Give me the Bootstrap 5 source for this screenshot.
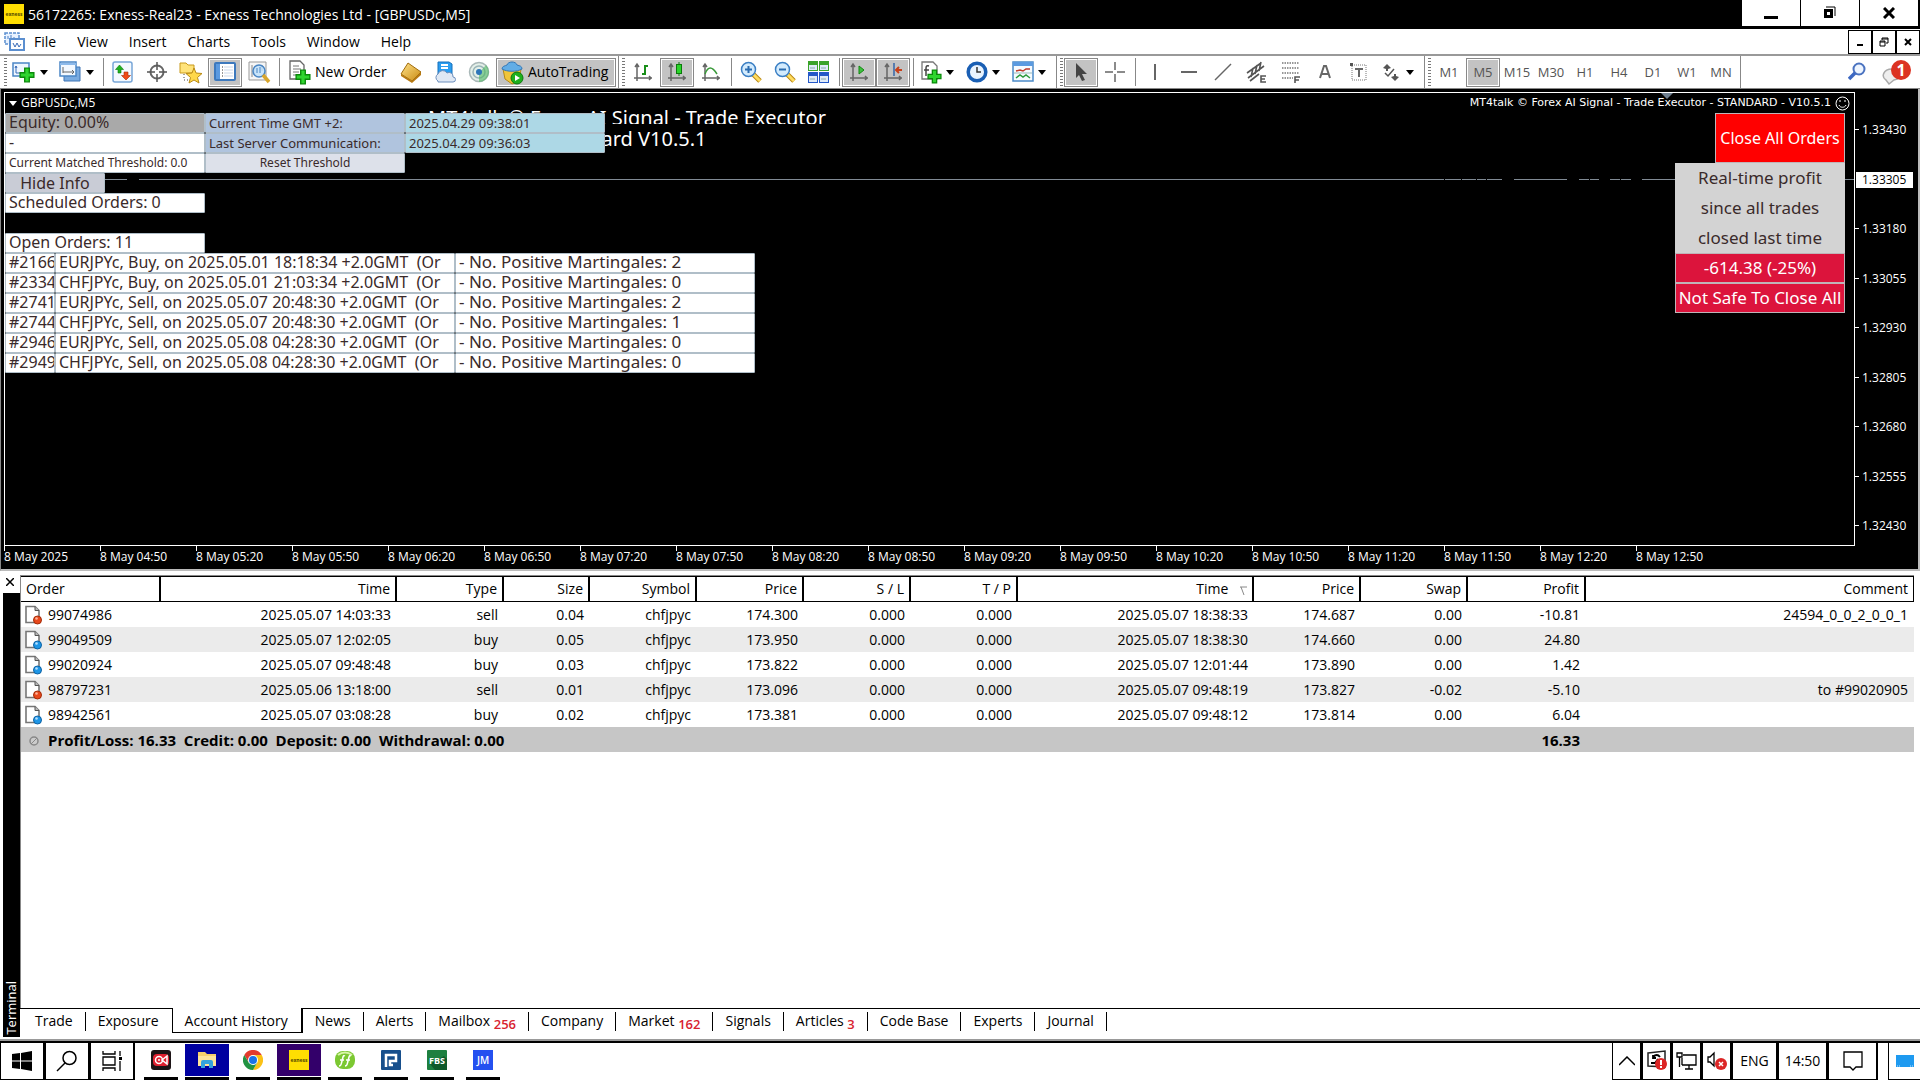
<!DOCTYPE html>
<html lang="en">
<head>
<meta charset="utf-8">
<meta name="viewport" content="width=device-width, initial-scale=1">
<title>56172265: Exness-Real23 - Exness Technologies Ltd - [GBPUSDc,M5]</title>
<link href="https://cdn.jsdelivr.net/npm/bootstrap@5.3.0/dist/css/bootstrap.min.css" rel="stylesheet">
<style>
:root{--ui:"Open Sans","Noto Sans",sans-serif;--tiny:"Open Sans","Noto Sans",sans-serif;--panel:"Noto Sans","Open Sans",sans-serif}
body{font-family:var(--ui);font-size:14px;line-height:20px;color:#000;background:#fff;overflow:hidden}
button{font:inherit;color:inherit;padding:0;border:0;background:none;white-space:nowrap}
svg{display:block;flex:none}
.titlebar{height:29px;background:#000;color:#fff}
.exlogo{width:20px;height:20px;background:#ffde02;font-size:5px;line-height:20px;color:#554a00;font-weight:700}
.winbtns{padding-right:2px}
.winbtn{width:58px;height:26px;background:#fff;margin-left:1px}
.menubar{height:25px}
.menubar a{color:#000;text-decoration:none;padding:0 11px 0 10px}
.mdibtn{width:24px;height:24px;border:1px solid #000}
.toolbar{height:35px;border-top:2px solid #999;border-bottom:1px solid #888;padding-left:2px}
.grip{width:3px;height:28px;margin:0 1px 0 2px;background:repeating-linear-gradient(#777 0 1px,#fff 1px 3px)}
.slot{width:34px;height:29px}
.slot.on,.auto.on{background:#c3c3c3;border:1px solid #888;box-shadow:inset 0 0 0 1px #fff}
.dd{width:46px;height:29px;padding-left:4px}
.caret{width:0;border:4px solid transparent;border-top:5px solid #000;border-bottom:0}
.sep{width:1px;height:28px;margin:0 2px 0 3px;background:#888}
.gend{width:1px;height:32px;margin:0 1px 0 2px;background:#888}
.neworder{width:112px;height:29px;padding-left:7px}
.auto{width:120px;height:29px}
.tf{font-family:var(--tiny);font-size:13px;color:#555}
.chart{height:482px;background:#000;color:#fff;border-left:1px solid #888;border-right:2px solid #bbb;border-bottom:2px solid #bbb;padding:3px 0 0 3px}
.plot{border:1px solid #fff;height:454px}
.tiny{font-family:var(--tiny);font-size:12px;line-height:16px}
.eaname{font-family:"DejaVu Sans",sans-serif;font-size:11px}
.axis{width:63px}
.prices{padding-top:30px;height:442px}
.prices div{height:16px}
.prices div::before{content:"";display:inline-block;width:4px;height:1px;background:#fff;vertical-align:4px;margin-right:3px}
.prices .now{background:#fff;color:#000;width:57px;margin-left:1px}
.prices .now::before{margin-right:2px;background:none}
.times div{width:96px;border-left:1px solid #fff;height:5px;overflow:visible;white-space:nowrap}
.times span{display:block;margin-left:-1px;padding-top:3px}
.panel{top:20px;left:0;font-family:var(--panel);font-size:16px;color:#3a2a2a;z-index:2}
.cellbox{height:20px;line-height:16px;border:1px solid #b0bec8;padding:0 3px;background:#fff;overflow:hidden;white-space:pre;border-radius:1px;text-align:left}
.w50{width:50px}.w100{width:100px}.w200{width:200px}.w300{width:300px}.w400{width:400px}
.w50{padding-right:0}
.w300{font-size:17px}
.small12{font-size:12px;line-height:18px}
.small13{font-size:13px;line-height:18px}
.headline{top:14px;left:0;width:1244px;text-align:center;font-family:var(--panel);font-size:20px;line-height:22px}
.cut{height:17px;overflow:hidden}
.right{top:20px;right:9px;font-family:var(--panel);font-size:17px}
.right button,.right .rt{height:30px;width:170px;border:1px solid #c0b4b8;text-align:center;line-height:28px;white-space:nowrap}
.right .closeall{width:130px;height:50px;background:#f00;font-size:16px}
.right .rt{background:#d3d3d3;color:#3a2a2a;border-color:#d3d3d3}
.right .crimson{background:#dc143c;color:#fff;border-color:#c0b4b8}
.terminal{min-height:0;padding-top:4px}
.side{width:20px}
.strip{width:17px;margin-left:3px;background:#000;color:#fff}
.strip span{writing-mode:vertical-rl;transform:rotate(180deg);font-size:13px;line-height:17px;padding-top:2px}
.hist{table-layout:fixed;width:100%;border-collapse:separate;border-spacing:0}
.hist th{height:26px;line-height:18px;font-weight:400;border:solid #000;border-width:1px 2px 1px 0;text-align:right;padding:0 5px}
.hist th:first-child,.hist td:first-child{text-align:left}
.hist th:last-child{border-right-width:1px}
.hist td{height:25px;padding:0 6px 0 5px;text-align:right;white-space:nowrap}
.hist tbody tr:nth-child(even){background:#ebebeb}
.hist tbody tr.total{background:#c6c6c6;font-weight:700;font-size:15px}
.hist td:first-child{padding-left:3px}
.docline{gap:6px}
.termbody{border-left:1px solid #888;border-top:1px solid #888;margin-right:6px}
.tabs{height:33px;border-top:1px solid #000;padding-left:3px}
.tabs a{color:#000;text-decoration:none;display:block;line-height:20px;padding:3px 13px 0 12px;white-space:nowrap}
.tabs li{height:24px;margin-top:-1px;position:relative}
.tabs li:not(.cur):not(.pre)::after{content:"";position:absolute;right:0;top:4px;height:19px;width:1px;background:#000}
.tabs .cur{border:solid #000;border-width:0 2px 1px 1px;background:#fff;height:25px}
.tabs sub{font-size:13px;color:#d8232f;font-weight:600;bottom:-3px;vertical-align:baseline}
.taskbar{height:39px;border-top:2px solid #000;box-shadow:0 -2px #999}
.tbox{border:1px solid #000;border-width:0 2px 1px 1px;height:37px}
.apps{padding-left:3px}
.app{width:34px;height:37px;margin:0 6px}
.app.wide{width:44px;margin:0 1px}
.app .ico{height:32px;width:100%}
.app .bar{height:3px;margin-top:1px;background:#000;width:100%}
</style>
<script src="https://cdn.jsdelivr.net/npm/bootstrap@5.3.0/dist/js/bootstrap.bundle.min.js"></script>
</head>
<body class="vh-100 d-flex flex-column">
<svg width="0" height="0" class="position-absolute">
<defs>
<linearGradient id="gold" x1="0" y1="0" x2="1" y2="1"><stop offset="0" stop-color="#ffe28a"/><stop offset="1" stop-color="#c98a10"/></linearGradient>
<symbol id="docbase" viewBox="0 0 18 20"><path d="M2 1.500h9l4 4v12H2z" fill="#fff" stroke="#777" stroke-width="1.600"/><path d="M11 1.500v4h4" fill="#bbb" stroke="#555"/></symbol>
<symbol id="sell" viewBox="0 0 18 20"><use href="#docbase"/><circle cx="13.500" cy="15" r="4" fill="#e8481c" stroke="#a22c08"/><circle cx="12.500" cy="13.500" r="1.300" fill="#ffb499"/></symbol>
<symbol id="buy" viewBox="0 0 18 20"><use href="#docbase"/><circle cx="13.500" cy="15" r="4" fill="#1e96e6" stroke="#0c62a4"/><circle cx="12.500" cy="13.500" r="1.300" fill="#b5e0ff"/></symbol>
<symbol id="axes" viewBox="0 0 20 20"><path d="M4 2v17M1 16h18M2 5l2-3 2 3M16 14l2 2-2 2" fill="none" stroke="#666" stroke-width="1.500"/></symbol>
<symbol id="plus" viewBox="0 0 14 14"><path d="M5 1h4v4h4v4H9v4H5V9H1V5h4z" fill="#2fd52f" stroke="#0a8a0a" stroke-width="1.200"/></symbol>
</defs>
</svg>

<header class="titlebar d-flex align-items-start">
  <div class="exlogo text-center mt-1 ms-1">exness</div>
  <div class="ms-1" style="padding-top:5px">56172265: Exness-Real23 - Exness Technologies Ltd - [GBPUSDc,M5]</div>
  <div class="ms-auto d-flex winbtns">
    <button class="winbtn d-flex justify-content-center align-items-center" aria-label="Minimize"><svg width="14" height="14"><path d="M0 10h14v3H0z"/></svg></button>
    <button class="winbtn d-flex justify-content-center align-items-center" aria-label="Restore"><svg width="14" height="14"><path d="M3 1h9v9" fill="none" stroke="#000"/><path d="M2.500 4.500h6v6h-6z" fill="none" stroke="#000" stroke-width="3"/></svg></button>
    <button class="winbtn d-flex justify-content-center align-items-center" aria-label="Close"><svg width="12" height="12"><path d="M1 1l10 10M11 1L1 11" stroke="#000" stroke-width="3"/></svg></button>
  </div>
</header>

<nav class="menubar d-flex align-items-center">
  <svg class="ms-1" width="22" height="22" viewBox="0 0 22 22"><path d="M1 2h14v11H1z" fill="#e8f2ff" stroke="#5b8fd0" stroke-width="1.500" stroke-dasharray="3 1"/><path d="M4 8V5m3 4V4m3 4V6" stroke="#4a7fc4"/><path d="M6 8h14v11H6z" fill="#fff" stroke="#5b8fd0" stroke-width="2"/><path d="M9 12l2 4 2-4 2 4 2-3" fill="none" stroke="#3a6cb8"/></svg>
  <a href="#" class="ps-2">File</a><a href="#">View</a><a href="#">Insert</a><a href="#">Charts</a><a href="#">Tools</a><a href="#">Window</a><a href="#">Help</a>
  <div class="ms-auto d-flex">
    <button class="mdibtn d-flex justify-content-center align-items-center" aria-label="Minimize chart"><svg width="8" height="10"><path d="M1 7h6v2H1z"/></svg></button>
    <button class="mdibtn d-flex justify-content-center align-items-center" aria-label="Restore chart"><svg width="10" height="10"><path d="M3 3V1h6v5H7M1 4h5v5H1zM1 5h5M3 2h6" fill="none" stroke="#000"/></svg></button>
    <button class="mdibtn d-flex justify-content-center align-items-center" aria-label="Close chart"><svg width="8" height="8"><path d="M1 1l6 6M7 1L1 7" stroke="#000" stroke-width="2"/></svg></button>
  </div>
</nav>

<div class="toolbar d-flex align-items-center">
  <i class="grip"></i>
  <button class="dd d-flex align-items-center gap-1" aria-label="New chart"><svg width="24" height="24" viewBox="0 0 24 24"><path d="M1 3h16v13H1z" fill="#eef6ff" stroke="#4b86c6" stroke-width="1.500"/><path d="M4 6v7h8M3 8l1-2 1 2" fill="none" stroke="#3a6cb8"/><use href="#plus" x="7" y="7" width="16" height="16"/></svg><i class="caret"></i></button>
  <button class="dd d-flex align-items-center gap-1" aria-label="Profiles"><svg width="24" height="24" viewBox="0 0 24 24"><path d="M6 7h16v14H6z" fill="#7aabe0" stroke="#3f74b5"/><path d="M2 2h16v14H2z" fill="#f2f8ff" stroke="#4b86c6" stroke-width="1.500"/><path d="M2 3h16v2H2z" fill="#8cb9ea"/><path d="M5 7v6M5 12h10M14 10l2 2-2 2" fill="none" stroke="#666"/></svg><i class="caret"></i></button>
  <i class="sep"></i>
  <button class="slot d-flex justify-content-center align-items-center" aria-label="Market Watch"><svg width="22" height="22" viewBox="0 0 22 22"><rect x="1" y="1" width="19" height="20" rx="2" fill="#f4f9ff" stroke="#78a6d8" stroke-width="1.500"/><path d="M7.500 4l4 4.500H9V12H6V8.500H3.500z" fill="#1fb21f" stroke="#0c7a0c" stroke-width=".6"/><path d="M14 19l-4.500-4.500H12V11h4v3.500h2.500z" fill="#f04a18" stroke="#a82c08" stroke-width=".6"/></svg></button>
  <button class="slot d-flex justify-content-center align-items-center" aria-label="Data Window"><svg width="20" height="22" viewBox="0 0 20 22"><circle cx="10" cy="11" r="6.500" fill="none" stroke="#666" stroke-width="2"/><path d="M10 1v8m0 4v8M0 11h8m4 0h8" stroke="#555" stroke-width="1.500"/></svg></button>
  <button class="slot d-flex justify-content-center align-items-center" aria-label="Navigator"><svg width="24" height="24" viewBox="0 0 24 24"><path d="M1 3h6l2 2h6v8H1z" fill="#ffe37a" stroke="#c99a1c"/><path d="M5 14v6h5" fill="none" stroke="#444" stroke-dasharray="1 2"/><path d="M15 8l2 5 6 .5-4.500 4 1.500 5.500-5-3-5 3 1.500-5.500L7 13.500l6-.5z" fill="#ffd84a" stroke="#b98a14"/></svg></button>
  <button class="slot on d-flex justify-content-center align-items-center" aria-label="Terminal"><svg width="22" height="20" viewBox="0 0 22 20"><rect x="1" y="1" width="20" height="17" rx="1" fill="#fff" stroke="#3d79bd" stroke-width="2"/><path d="M2 2h4v15H2z" fill="#5b9ae0"/><path d="M10 5h9M10 8h9M10 11h9M10 14h9" stroke="#cbd8ea"/><path d="M8 5h1M8 8h1M8 11h1M8 14h1" stroke="#333"/></svg></button>
  <button class="slot d-flex justify-content-center align-items-center" aria-label="Strategy Tester"><svg width="24" height="24" viewBox="0 0 24 24"><path d="M2 2h17v18H2z" fill="#f6f6f6" stroke="#999"/><path d="M5 5v12m2-9v5m8-8v6" stroke="#888"/><circle cx="12" cy="11" r="6" fill="#bfe0fa" fill-opacity=".85" stroke="#4a86c4" stroke-width="1.500"/><path d="M10 8v5m3-6v6" stroke="#4a86c4"/><path d="M16 15l6 7" stroke="#d9a62c" stroke-width="3.500"/></svg></button>
  <i class="sep"></i>
  <button class="neworder d-flex align-items-center"><svg width="22" height="26" viewBox="0 0 22 26"><path d="M1 2h10l4 4v14H1z" fill="#fff" stroke="#666" stroke-width="1.300"/><path d="M4 7h6M4 10h8M4 13h6M4 16h3" stroke="#777"/><use href="#plus" x="6" y="10" width="16" height="16"/></svg><span class="ms-1">New Order</span></button>
  <button class="slot d-flex justify-content-center align-items-center" aria-label="MetaEditor"><svg width="22" height="22" viewBox="0 0 22 22"><path d="M8 2l13 9-9 9L1 13z" fill="url(#gold)" stroke="#a06c0c"/><path d="M1 13l11 7 9-9v3l-9 8L1 15z" fill="#b87a12"/></svg></button>
  <button class="slot d-flex justify-content-center align-items-center" aria-label="Virtual Hosting"><svg width="22" height="24" viewBox="0 0 22 24"><path d="M4 2h11l3 2v12H4z" fill="#2a9df0" stroke="#1670bb"/><path d="M7 5h7M7 8h7" stroke="#fff" stroke-width="2"/><path d="M4 21a4 4 0 010-7 5 5 0 019-1 4 4 0 016 4 2.500 2.500 0 010 5H4z" fill="#dfe8f4" stroke="#6d8fbd"/></svg></button>
  <button class="slot d-flex justify-content-center align-items-center" aria-label="Signals"><svg width="22" height="22" viewBox="0 0 22 22"><circle cx="11" cy="11" r="9.500" fill="#e4efe8" stroke="#a9b8b8" stroke-width="1.500"/><circle cx="11" cy="11" r="6" fill="none" stroke="#9ab5b8" stroke-width="1.500"/><path d="M11 12v9a10 10 0 007-17z" fill="#4fb862" fill-opacity=".6"/><circle cx="11" cy="11" r="3" fill="#2d76b8"/></svg></button>
  <button class="auto on d-flex align-items-center ps-1"><svg width="23" height="25" viewBox="0 0 23 25"><path d="M2 9h18l-2 12-7 3-7-5z" fill="#f0c53a" stroke="#b58a16"/><path d="M1 9c0-3 3-3 5-4 1-4 9-4 10 0 3 1 5 1 5 4-5 3-15 3-20 0z" fill="#62ade6" stroke="#3478b8"/><circle cx="16" cy="18" r="6" fill="#1db01d" stroke="#0d770d"/><path d="M14 15l5 3-5 3z" fill="#fff"/></svg><span class="ms-1">AutoTrading</span></button>
  <i class="gend"></i><i class="grip"></i>
  <button class="slot d-flex justify-content-center align-items-center" aria-label="Bar chart"><svg width="20" height="20"><use href="#axes"/><path d="M12 3v10M12 4h3M9 12h3" stroke="#1a8f1a" stroke-width="2"/></svg></button>
  <button class="slot on d-flex justify-content-center align-items-center" aria-label="Candlesticks"><svg width="20" height="20"><use href="#axes"/><path d="M12 0v14" stroke="#0b7a0b"/><rect x="9.500" y="2.500" width="5" height="9" fill="#2ad52a" stroke="#0b7a0b"/></svg></button>
  <button class="slot d-flex justify-content-center align-items-center" aria-label="Line chart"><svg width="20" height="20"><use href="#axes"/><path d="M4 12c3-8 7-8 12 0" fill="none" stroke="#3a9a3a" stroke-width="1.500"/></svg></button>
  <i class="sep"></i>
  <button class="slot d-flex justify-content-center align-items-center" aria-label="Zoom in"><svg width="22" height="22" viewBox="0 0 22 22"><path d="M13 13l7 7" stroke="#b98710" stroke-width="5"/><path d="M13 13l7 7" stroke="#ffdc60" stroke-width="3"/><circle cx="8.500" cy="8.500" r="7" fill="#d3ebfd" stroke="#3b7fc4" stroke-width="1.500"/><path d="M8.500 5v7M5 8.500h7" stroke="#2b6cb0" stroke-width="2"/></svg></button>
  <button class="slot d-flex justify-content-center align-items-center" aria-label="Zoom out"><svg width="22" height="22" viewBox="0 0 22 22"><path d="M13 13l7 7" stroke="#b98710" stroke-width="5"/><path d="M13 13l7 7" stroke="#ffdc60" stroke-width="3"/><circle cx="8.500" cy="8.500" r="7" fill="#d3ebfd" stroke="#3b7fc4" stroke-width="1.500"/><path d="M5 8.500h7" stroke="#2b6cb0" stroke-width="2"/></svg></button>
  <button class="slot d-flex justify-content-center align-items-center" aria-label="Tile windows"><svg width="22" height="22"><path d="M0 0h10v10H0zM11 0h10v10H11z" fill="#3aa32a"/><path d="M0 11h10v11H0zM11 11h10v11H11z" fill="#2458c8"/><path d="M1 4h8v5H1zM12 4h8v5h-8zM1 15h8v6H1zM12 15h8v6h-8z" fill="#dfeaf8"/><path d="M2 7h5M13 7h5M2 18h5M13 18h5" stroke="#8aa"/></svg></button>
  <i class="sep"></i>
  <button class="slot on d-flex justify-content-center align-items-center" aria-label="Auto scroll"><svg width="20" height="20"><use href="#axes"/><path d="M10 4l5 4-5 4z" fill="#3fc03f" stroke="#118811"/></svg></button>
  <button class="slot on d-flex justify-content-center align-items-center" aria-label="Chart shift"><svg width="20" height="20"><use href="#axes"/><path d="M11 1v13" stroke="#36a" stroke-width="1.500"/><path d="M19 8h-5M16 5l-3 3 3 3" fill="none" stroke="#c8401a" stroke-width="2"/></svg></button>
  <i class="sep"></i>
  <button class="dd d-flex align-items-center gap-1" aria-label="Indicators"><svg width="22" height="24" viewBox="0 0 22 24"><path d="M2 2h11l4 4v13H2z" fill="#fff" stroke="#777" stroke-width="1.300"/><path d="M9 6c-3-1-3 1-3 3v7M4 10h5" fill="none" stroke="#444" stroke-width="1.500"/><use href="#plus" x="7" y="9" width="15" height="15"/></svg><i class="caret"></i></button>
  <button class="dd d-flex align-items-center gap-1" aria-label="Periods"><svg width="22" height="22" viewBox="0 0 22 22"><circle cx="11" cy="11" r="8.800" fill="#e9f4ff" stroke="#1a5fb4" stroke-width="3.500"/><path d="M11 6v5h4" fill="none" stroke="#333" stroke-width="1.500"/></svg><i class="caret"></i></button>
  <button class="dd d-flex align-items-center gap-1" aria-label="Templates"><svg width="22" height="22" viewBox="0 0 22 22"><rect x="1" y="1" width="20" height="19" fill="#f6fbff" stroke="#4b8ac8" stroke-width="1.500"/><path d="M1 1h20v4H1z" fill="#5b9ae0"/><path d="M4 10l4-1 3 1 3-2 4 0" fill="none" stroke="#c0392b" stroke-width="1.500"/><path d="M4 17l4-3 3 2 3-2 4 3" fill="none" stroke="#2e9a3e" stroke-width="1.500"/><path d="M2 12h18" stroke="#9bb"/></svg><i class="caret"></i></button>
  <i class="gend"></i><i class="grip"></i>
  <button class="slot on d-flex justify-content-center align-items-center" aria-label="Cursor"><svg width="14" height="20" viewBox="0 0 14 20"><path d="M2 1v15l3-3 3 6 3-1-3-6h5z" fill="#444"/></svg></button>
  <button class="slot d-flex justify-content-center align-items-center" aria-label="Crosshair"><svg width="20" height="20"><path d="M10 0v8m0 4v8M0 10h8m4 0h8" stroke="#666" stroke-width="1.500"/></svg></button>
  <i class="sep"></i>
  <button class="slot d-flex justify-content-center align-items-center" aria-label="Vertical line"><svg width="4" height="18"><path d="M2 1v16" stroke="#666" stroke-width="2"/></svg></button>
  <button class="slot d-flex justify-content-center align-items-center" aria-label="Horizontal line"><svg width="16" height="4"><path d="M0 2h16" stroke="#666" stroke-width="2"/></svg></button>
  <button class="slot d-flex justify-content-center align-items-center" aria-label="Trendline"><svg width="18" height="18"><path d="M1 17L17 1" stroke="#666" stroke-width="1.500"/></svg></button>
  <button class="slot d-flex justify-content-center align-items-center" aria-label="Equidistant channel"><svg width="22" height="22" viewBox="0 0 22 22"><path d="M1 12L15 2M2 17L18 5M5 16l2-9m2 6l2-9m2 6l2-9M4 20l9-7" stroke="#555" stroke-width="1.600"/><path d="M20 15h-5v6h5M15 18h4" fill="none" stroke="#555" stroke-width="1.600"/></svg></button>
  <button class="slot d-flex justify-content-center align-items-center" aria-label="Fibonacci"><svg width="20" height="22" viewBox="0 0 20 22"><path d="M1 2h17M1 7h17M1 12h17M1 17h11" stroke="#777" stroke-width="1.500" stroke-dasharray="1.500 1"/><path d="M14 22v-6h5M14 19h4" fill="none" stroke="#555" stroke-width="1.600"/></svg></button>
  <button class="slot d-flex justify-content-center align-items-center" aria-label="Text"><svg width="12" height="14"><path d="M1 13L5 1h2l4 12M3 9h6" fill="none" stroke="#666" stroke-width="2"/></svg></button>
  <button class="slot d-flex justify-content-center align-items-center" aria-label="Text label"><svg width="18" height="20"><path d="M2 3h14v15H2z" fill="none" stroke="#777" stroke-dasharray="1 1"/><path d="M0 1h3v3H0z" fill="#555"/><path d="M5 7h8M9 7v8" stroke="#666" stroke-width="2"/></svg></button>
  <button class="dd d-flex align-items-center gap-1" aria-label="Arrows"><svg width="22" height="20"><path d="M7 2l4 4-3 1v2H6V7L3 6zM15 19l-4-4 3-1v-2h2v2l3 1z" fill="#555"/><path d="M5 11l3 3 6-7" fill="none" stroke="#555" stroke-width="1.500"/></svg><i class="caret"></i></button>
  <i class="gend"></i><i class="grip"></i>
  <button class="slot tf">M1</button><button class="slot tf on">M5</button><button class="slot tf">M15</button><button class="slot tf">M30</button><button class="slot tf">H1</button><button class="slot tf">H4</button><button class="slot tf">D1</button><button class="slot tf">W1</button><button class="slot tf">MN</button>
  <i class="gend"></i>
  <div class="ms-auto d-flex gap-3 pe-2">
    <button aria-label="Search"><svg width="18" height="26" viewBox="2 0 18 26"><circle cx="13" cy="10" r="5.500" fill="#eef5ff" stroke="#4a72c0" stroke-width="2"/><path d="M9 14l-6 6" stroke="#3d68c2" stroke-width="3.500"/></svg></button>
    <button aria-label="Notifications"><svg width="30" height="28" viewBox="0 0 30 28"><path d="M4 22c-5-3-3-11 6-11s12 9 2 11l-5 4z" fill="#eee" stroke="#aaa" stroke-width="1.500"/><circle cx="19" cy="12" r="10" fill="#dc3322"/><text x="19" y="18" text-anchor="middle" font-family="Open Sans" font-weight="700" font-size="16" fill="#fff">1</text></svg></button>
  </div>
</div>

<main class="chart">
  <div class="d-flex">
    <div class="plot flex-grow-1 position-relative">
      <div class="d-flex justify-content-between align-items-center tiny" style="height:20px">
        <div class="d-flex align-items-center gap-1"><i class="caret ms-1" style="border-top-color:#fff"></i><span>GBPUSDc,M5</span></div>
        <div class="d-flex align-items-center gap-1 pe-1"><span class="eaname">MT4talk © Forex AI Signal - Trade Executor - STANDARD - V10.5.1</span><svg width="15" height="15"><circle cx="7.500" cy="7.500" r="6.500" fill="none" stroke="#fff"/><path d="M4 9c1 3 6 3 7 0M5 4v2M10 4v2" fill="none" stroke="#fff"/></svg></div>
      </div>
      <svg class="position-absolute" style="right:181px;top:0" width="12" height="6"><path d="M0 0h12L6 6z" fill="#708090"/></svg>
      <div class="position-absolute headline"><div class="cut">MT4talk © Forex AI Signal - Trade Executor</div><div class="pt-1">Standard V10.5.1</div></div>
      <div class="position-absolute w-100 d-flex" style="top:86px;height:1px;padding-left:100px">
        <svg width="34" height="1"><path d="M0 .5h22" stroke="#808a94"/></svg><div class="flex-grow-1" style="background:#808a94"></div>
        <svg width="412" height="1"><path d="M0 .5h2M3 .5h16M20 .5h14M35 .5h9M45 .5h15M72 .5h53M137 .5h10M148 .5h9M168 .5h10M179 .5h10M200 .5h212" stroke="#808a94"/></svg>
      </div>
      <section class="position-absolute panel">
        <div class="d-flex"><div class="cellbox w200" style="background:#a9a9a9">Equity: 0.00%</div><div class="cellbox w200 small13" style="background:#b0c4de">Current Time GMT +2:</div><div class="cellbox w200 small13" style="background:#add8e6">2025.04.29 09:38:01</div></div>
        <div class="d-flex"><div class="cellbox w200">-</div><div class="cellbox w200 small13" style="background:#b0c4de">Last Server Communication:</div><div class="cellbox w200 small13" style="background:#add8e6">2025.04.29 09:36:03</div></div>
        <div class="d-flex"><div class="cellbox w200 small12">Current Matched Threshold: 0.0</div><button class="cellbox w200 small12 text-center" style="background:#dde1ea">Reset Threshold</button></div>
        <button class="cellbox w100 d-block text-center" style="background:#c9ccd6">Hide Info</button>
        <div class="cellbox w200">Scheduled Orders: 0</div>
        <div class="cellbox w200" style="margin-top:20px">Open Orders: 11</div>
        <div class="d-flex"><div class="cellbox w50">#2166</div><div class="cellbox w400">EURJPYc, Buy, on 2025.05.01 18:18:34 +2.0GMT  (Or</div><div class="cellbox w300">- No. Positive Martingales: 2</div></div>
        <div class="d-flex"><div class="cellbox w50">#2334</div><div class="cellbox w400">CHFJPYc, Buy, on 2025.05.01 21:03:34 +2.0GMT  (Or</div><div class="cellbox w300">- No. Positive Martingales: 0</div></div>
        <div class="d-flex"><div class="cellbox w50">#2741</div><div class="cellbox w400">EURJPYc, Sell, on 2025.05.07 20:48:30 +2.0GMT  (Or</div><div class="cellbox w300">- No. Positive Martingales: 2</div></div>
        <div class="d-flex"><div class="cellbox w50">#2744</div><div class="cellbox w400">CHFJPYc, Sell, on 2025.05.07 20:48:30 +2.0GMT  (Or</div><div class="cellbox w300">- No. Positive Martingales: 1</div></div>
        <div class="d-flex"><div class="cellbox w50">#2946</div><div class="cellbox w400">EURJPYc, Sell, on 2025.05.08 04:28:30 +2.0GMT  (Or</div><div class="cellbox w300">- No. Positive Martingales: 0</div></div>
        <div class="d-flex"><div class="cellbox w50">#2949</div><div class="cellbox w400">CHFJPYc, Sell, on 2025.05.08 04:28:30 +2.0GMT  (Or</div><div class="cellbox w300">- No. Positive Martingales: 0</div></div>
      </section>
      <section class="position-absolute right d-flex flex-column align-items-end">
        <button class="closeall">Close All Orders</button>
        <div class="rt">Real-time profit</div><div class="rt">since all trades</div><div class="rt">closed last time</div>
        <div class="rt crimson">-614.38 (-25%)</div>
        <button class="crimson">Not Safe To Close All</button>
      </section>
    </div>
    <div class="axis tiny"><div class="prices d-flex flex-column justify-content-between">
      <div>1.33430</div><div class="now">1.33305</div><div>1.33180</div><div>1.33055</div><div>1.32930</div><div>1.32805</div><div>1.32680</div><div>1.32555</div><div>1.32430</div>
    </div></div>
  </div>
  <div class="times tiny d-flex">
    <div><span>8 May 2025</span></div><div><span>8 May 04:50</span></div><div><span>8 May 05:20</span></div><div><span>8 May 05:50</span></div><div><span>8 May 06:20</span></div><div><span>8 May 06:50</span></div><div><span>8 May 07:20</span></div><div><span>8 May 07:50</span></div><div><span>8 May 08:20</span></div><div><span>8 May 08:50</span></div><div><span>8 May 09:20</span></div><div><span>8 May 09:50</span></div><div><span>8 May 10:20</span></div><div><span>8 May 10:50</span></div><div><span>8 May 11:20</span></div><div><span>8 May 11:50</span></div><div><span>8 May 12:20</span></div><div><span>8 May 12:50</span></div>
  </div>
</main>

<section class="terminal flex-grow-1 d-flex">
  <div class="side d-flex flex-column">
    <button class="d-flex justify-content-center" style="height:18px;padding-top:3px" aria-label="Close terminal"><svg width="8" height="8"><path d="M0 0l8 8M8 0L0 8" stroke="#000" stroke-width="1.500"/></svg></button>
    <div class="strip flex-grow-1 d-flex align-items-end mb-1"><span>Terminal</span></div>
  </div>
  <div class="flex-grow-1 d-flex flex-column">
    <div class="termbody flex-grow-1">
      <table class="hist">
        <colgroup><col style="width:140px"><col style="width:236px"><col style="width:107px"><col style="width:86px"><col style="width:107px"><col style="width:107px"><col style="width:107px"><col style="width:107px"><col style="width:236px"><col style="width:107px"><col style="width:107px"><col style="width:118px"><col></colgroup>
        <thead><tr><th>Order</th><th>Time</th><th>Type</th><th>Size</th><th>Symbol</th><th>Price</th><th>S / L</th><th>T / P</th><th>Time <svg class="d-inline ms-2" width="7" height="9"><path d="M0 1h7M1 1l3 8" fill="none" stroke="#888"/></svg></th><th>Price</th><th>Swap</th><th>Profit</th><th>Comment</th></tr></thead>
        <tbody>
        <tr><td><div class="d-flex align-items-center docline"><svg width="18" height="20"><use href="#sell"/></svg>99074986</div></td><td>2025.05.07 14:03:33</td><td>sell</td><td>0.04</td><td>chfjpyc</td><td>174.300</td><td>0.000</td><td>0.000</td><td>2025.05.07 18:38:33</td><td>174.687</td><td>0.00</td><td>-10.81</td><td>24594_0_0_2_0_0_1</td></tr>
        <tr><td><div class="d-flex align-items-center docline"><svg width="18" height="20"><use href="#buy"/></svg>99049509</div></td><td>2025.05.07 12:02:05</td><td>buy</td><td>0.05</td><td>chfjpyc</td><td>173.950</td><td>0.000</td><td>0.000</td><td>2025.05.07 18:38:30</td><td>174.660</td><td>0.00</td><td>24.80</td><td></td></tr>
        <tr><td><div class="d-flex align-items-center docline"><svg width="18" height="20"><use href="#buy"/></svg>99020924</div></td><td>2025.05.07 09:48:48</td><td>buy</td><td>0.03</td><td>chfjpyc</td><td>173.822</td><td>0.000</td><td>0.000</td><td>2025.05.07 12:01:44</td><td>173.890</td><td>0.00</td><td>1.42</td><td></td></tr>
        <tr><td><div class="d-flex align-items-center docline"><svg width="18" height="20"><use href="#sell"/></svg>98797231</div></td><td>2025.05.06 13:18:00</td><td>sell</td><td>0.01</td><td>chfjpyc</td><td>173.096</td><td>0.000</td><td>0.000</td><td>2025.05.07 09:48:19</td><td>173.827</td><td>-0.02</td><td>-5.10</td><td>to #99020905</td></tr>
        <tr><td><div class="d-flex align-items-center docline"><svg width="18" height="20"><use href="#buy"/></svg>98942561</div></td><td>2025.05.07 03:08:28</td><td>buy</td><td>0.02</td><td>chfjpyc</td><td>173.381</td><td>0.000</td><td>0.000</td><td>2025.05.07 09:48:12</td><td>173.814</td><td>0.00</td><td>6.04</td><td></td></tr>
        <tr class="total"><td colspan="11"><div class="d-flex align-items-center docline"><svg width="18" height="20"><circle cx="10" cy="11" r="4" fill="#ccc" stroke="#888" stroke-width="1.500"/><path d="M7 14l6-6" stroke="#888"/></svg>Profit/Loss: 16.33&nbsp; Credit: 0.00&nbsp; Deposit: 0.00&nbsp; Withdrawal: 0.00</div></td><td>16.33</td><td></td></tr>
        </tbody>
      </table>
    </div>
    <ul class="tabs list-unstyled d-flex mb-0">
      <li><a href="#">Trade</a></li><li class="pre"><a href="#">Exposure</a></li><li class="cur"><a href="#">Account History</a></li><li><a href="#">News</a></li><li><a href="#">Alerts</a></li><li><a href="#">Mailbox <sub>256</sub></a></li><li><a href="#">Company</a></li><li><a href="#">Market <sub>162</sub></a></li><li><a href="#">Signals</a></li><li><a href="#">Articles <sub>3</sub></a></li><li><a href="#">Code Base</a></li><li><a href="#">Experts</a></li><li><a href="#">Journal</a></li>
    </ul>
  </div>
</section>

<footer class="taskbar d-flex">
  <button class="tbox d-flex justify-content-center align-items-center" style="width:45px" aria-label="Start"><svg width="20" height="20"><path d="M0 3l8-1v7.500H0zM9 2l11-2v9.500H9zM0 10.500h8V18l-8-1zM9 10.500h11V20L9 18z"/></svg></button>
  <button class="tbox d-flex justify-content-center align-items-center" style="width:45px" aria-label="Search"><svg width="22" height="22"><circle cx="13.500" cy="8" r="6.500" fill="none" stroke="#000" stroke-width="1.500"/><path d="M9 13l-8 8" stroke="#000" stroke-width="1.500"/></svg></button>
  <button class="tbox d-flex justify-content-center align-items-center" style="width:45px" aria-label="Task view"><svg width="20" height="20"><path d="M1 0v3h12V0M1 20v-3h12v3M1 6h12v8H1zM18 0v5M18 10v10" fill="none" stroke="#000" stroke-width="1.300"/><path d="M17 6h3v3h-3z"/></svg></button>
  <div class="d-flex apps">
  <button class="app" aria-label="Recorder"><span class="ico d-flex justify-content-center align-items-center"><svg width="20" height="20"><rect width="20" height="20" rx="3" fill="#1c1416"/><rect x="2" y="4" width="16" height="12" rx="4" fill="#e02030"/><circle cx="8" cy="10" r="3.500" fill="none" stroke="#fff" stroke-width="1.500"/><path d="M11 10l5-4v8z" fill="none" stroke="#fff" stroke-width="1.500"/><circle cx="8" cy="10" r="1" fill="#fff"/></svg></span><span class="bar d-block"></span></button>
  <button class="app wide" aria-label="File Explorer"><span class="ico d-flex justify-content-center align-items-center" style="background:#0000a0"><svg width="20" height="18"><path d="M1 1h7l2 2h9v12H1z" fill="#f7cf6b"/><path d="M1 5h18v10H1z" fill="#ffe49a"/><path d="M4 17v-6q0-2 2-2h8q2 0 2 2v6h-4v-4H8v4z" fill="#35a3dc"/></svg></span><span class="bar d-block"></span></button>
  <button class="app" aria-label="Chrome"><span class="ico d-flex justify-content-center align-items-center"><svg width="20" height="20" viewBox="-10 -10 20 20"><path d="M-8.700-5A10 10 0 018.700-5H0L-4.300 2.500z" fill="#e33b2e"/><path d="M8.700-5A10 10 0 010 10L4.300 2.500 0-5z" fill="#fbc116"/><path d="M-8.700-5A10 10 0 000 10L4.300 2.500H-4.300z" fill="#229342"/><circle r="5" fill="#fff"/><circle r="4" fill="#1a73e8"/></svg></span><span class="bar d-block"></span></button>
  <button class="app wide" aria-label="Exness terminal"><span class="ico d-flex justify-content-center align-items-center" style="background:#33006a"><span class="exlogo">exness</span></span><span class="bar d-block"></span></button>
  <button class="app" aria-label="Forex factory"><span class="ico d-flex justify-content-center align-items-center"><svg width="20" height="20"><rect y="1" width="20" height="18" rx="8" fill="#7cc832"/><path d="M3 5q7-5 14 0" stroke="#d8f5a8" stroke-width="2" fill="none"/><path d="M4 16q2 0 2.500-3L8 7q.5-2 2-1M5 10h4M10 16q2 0 2.500-3L14 7q.5-2 2-1M11 10h4" fill="none" stroke="#fff" stroke-width="1.500"/></svg></span><span class="bar d-block"></span></button>
  <button class="app" aria-label="RoboForex"><span class="ico d-flex justify-content-center align-items-center"><svg width="20" height="20"><rect width="20" height="20" rx="1" fill="#174f8c"/><path d="M5 17V5h10v6H9v4h3" fill="none" stroke="#fff" stroke-width="2.500"/></svg></span><span class="bar d-block"></span></button>
  <button class="app" aria-label="FBS"><span class="ico d-flex justify-content-center align-items-center"><svg width="20" height="20"><rect width="20" height="20" rx="1" fill="#1d8040"/><path d="M3 14l14-8 3 3v11H8z" fill="#0f5a2a"/><text x="10" y="14" text-anchor="middle" font-family="Open Sans" font-weight="700" font-size="9" fill="#fff">FBS</text></svg></span><span class="bar d-block"></span></button>
  <button class="app" aria-label="JustMarkets"><span class="ico d-flex justify-content-center align-items-center"><svg width="20" height="20"><rect width="20" height="20" fill="#2450f0"/><text x="10" y="14" text-anchor="middle" font-family="Open Sans" font-weight="600" font-size="10" fill="#fff">JM</text></svg></span><span class="bar d-block"></span></button>
  </div>
  <div class="ms-auto d-flex">
    <button class="tbox d-flex justify-content-center align-items-center" style="width:30px" aria-label="Hidden icons"><svg width="16" height="10"><path d="M0 9l8-8 8 8" fill="none" stroke="#000" stroke-width="1.500"/></svg></button>
    <button class="tbox d-flex justify-content-center align-items-center" style="width:30px" aria-label="Security alert"><svg width="22" height="22"><path d="M2 3l17-2v16L2 16z" fill="none" stroke="#222" stroke-width="1.500"/><path d="M7 7q4-4 7 0M7 5v3h3M5 13h7M12 9l-3 4" fill="none" stroke="#000" stroke-width="1.800"/><circle cx="15" cy="14" r="6" fill="#dc2626"/><path d="M15 10v5M15 16v2" stroke="#fff" stroke-width="2"/></svg></button>
    <button class="tbox d-flex justify-content-center align-items-center" style="width:30px" aria-label="Network"><svg width="22" height="20"><path d="M7 4h13v10H6M13 14v4M9 18h8M6 7v7" fill="none" stroke="#000" stroke-width="1.300"/><path d="M1 2h5v4H1zM3.500 6v10" fill="#fff" stroke="#000" stroke-width="1.300"/></svg></button>
    <button class="tbox d-flex justify-content-center align-items-center" style="width:30px" aria-label="Muted"><svg width="20" height="20"><path d="M1 6h2l4-4v13l-4-4H1z" fill="none" stroke="#000" stroke-width="1.300"/><circle cx="14" cy="13" r="6" fill="#dc2626"/><path d="M12 11l4 4M16 11l-4 4" stroke="#fff" stroke-width="1.500"/></svg></button>
    <button class="tbox" style="width:46px">ENG</button>
    <button class="tbox" style="width:50px">14:50</button>
    <button class="tbox d-flex justify-content-center align-items-center" style="width:50px" aria-label="Action center"><svg width="20" height="20"><path d="M1 1h18v15h-6l-3 3-3-3H1z" fill="none" stroke="#000" stroke-width="1.300"/></svg></button>
    <button class="tbox d-flex justify-content-center align-items-center border-end-0" style="width:32px;margin-left:10px" aria-label="Show desktop"><svg width="18" height="12"><rect width="18" height="12" fill="#1e9af0"/><path d="M1 11h3m10 0h3" stroke="#bfe3ff" stroke-dasharray="1 1"/></svg></button>
  </div>
</footer>
</body>
</html>
